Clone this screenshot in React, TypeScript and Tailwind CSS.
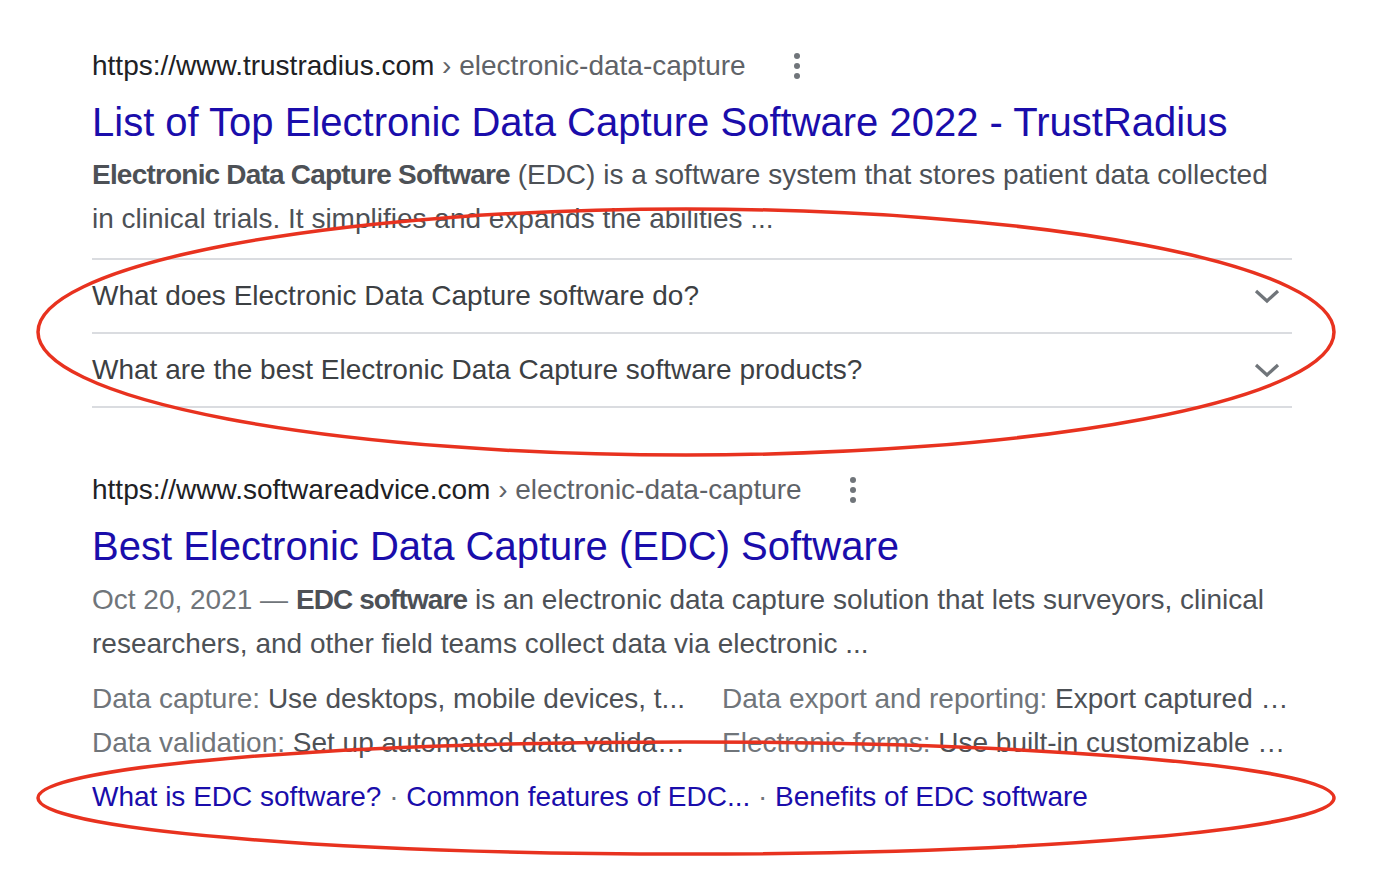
import React from 'react';

const dots = (
  <svg width="12" height="28" viewBox="0 0 12 28" className="shrink-0">
    <circle cx="6" cy="4" r="3" fill="#70757a" />
    <circle cx="6" cy="14" r="3" fill="#70757a" />
    <circle cx="6" cy="24" r="3" fill="#70757a" />
  </svg>
);

const Chevron = () => (
  <svg width="26" height="16" viewBox="0 0 26 16" className="shrink-0">
    <path d="M2 3 L13 13 L24 3" fill="none" stroke="#70757a" strokeWidth="3.2" />
  </svg>
);

const UrlRow = ({ site, crumb }: { site: string; crumb: string }) => (
  <div className="flex h-[40px] items-center text-[28px] leading-[40px]">
    <span className="text-[#202124]">{site}</span>
    <span className="text-[#5f6368]">&nbsp;› {crumb}</span>
    <span className="ml-[45px]">{dots}</span>
  </div>
);

const Faq = ({ q }: { q: string }) => (
  <div className="flex h-[74px] items-center justify-between border-b-2 border-[#dadce0] pr-[12px]">
    <span className="text-[28px] text-[#3c4043]">{q}</span>
    <Chevron />
  </div>
);

const features = [
  ['Data capture: ', 'Use desktops, mobile devices, t...'],
  ['Data export and reporting: ', 'Export captured …'],
  ['Data validation: ', 'Set up automated data valida…'],
  ['Electronic forms: ', 'Use built-in customizable …'],
];

export default function App() {
  return (
    <div className="relative min-h-screen overflow-hidden bg-white font-['Liberation_Sans',Arial,sans-serif]">
      <div className="ml-[92px] w-[1200px] pt-[46px]">
        {/* result 1 */}
        <UrlRow site="https://www.trustradius.com" crumb="electronic-data-capture" />
        <div className="pt-[10px] text-[40px] leading-[52px] text-[#1a0dab]">
          List of Top Electronic Data Capture Software 2022 - TrustRadius
        </div>
        <div className="mt-[5px] whitespace-nowrap text-[28px] leading-[44px] text-[#4d5156]">
          <div>
            <b className="tracking-[-0.8px]">Electronic Data Capture Software</b> (EDC) is a software system that
            stores patient data collected
          </div>
          <div>in clinical trials. It simplifies and expands the abilities ...</div>
        </div>
        <div className="mt-[17px] border-t-2 border-[#dadce0]">
          <Faq q="What does Electronic Data Capture software do?" />
          <Faq q="What are the best Electronic Data Capture software products?" />
        </div>

        {/* result 2 */}
        <div className="mt-[62px]">
          <UrlRow site="https://www.softwareadvice.com" crumb="electronic-data-capture" />
          <div className="pt-[10px] text-[40px] leading-[52px] text-[#1a0dab]">
            Best Electronic Data Capture (EDC) Software
          </div>
          <div className="mt-[6px] whitespace-nowrap text-[28px] leading-[44px] text-[#4d5156]">
            <div>
              <span className="text-[#70757a]">Oct 20, 2021 — </span>
              <b className="tracking-[-0.9px]">EDC software</b> is an electronic data capture solution that lets
              surveyors, clinical
            </div>
            <div>researchers, and other field teams collect data via electronic ...</div>
          </div>
          <div className="mt-[11px] grid grid-cols-[630px_570px] text-[28px] leading-[44px]">
            {features.map(([k, v]) => (
              <div key={k} className="whitespace-nowrap">
                <span className="text-[#70757a]">{k}</span>
                <span className="text-[#4d5156]">{v}</span>
              </div>
            ))}
          </div>
          <div className="mt-[10px] whitespace-nowrap text-[28px] leading-[44px] text-[#1a0dab]">
            What is EDC software?
            <span className="text-[#70757a]"> · </span>
            Common features of EDC...
            <span className="text-[#70757a]"> · </span>
            Benefits of EDC software
          </div>
        </div>
      </div>

      {/* hand-drawn annotation rings */}
      <svg className="pointer-events-none absolute left-0 top-0" width="1398" height="878" viewBox="0 0 1398 878">
        <ellipse cx="686" cy="332" rx="648" ry="123" fill="none" stroke="#e8321f" strokeWidth="3.5" />
        <ellipse cx="686" cy="798" rx="648" ry="56" fill="none" stroke="#e8321f" strokeWidth="3.5" />
      </svg>
    </div>
  );
}
